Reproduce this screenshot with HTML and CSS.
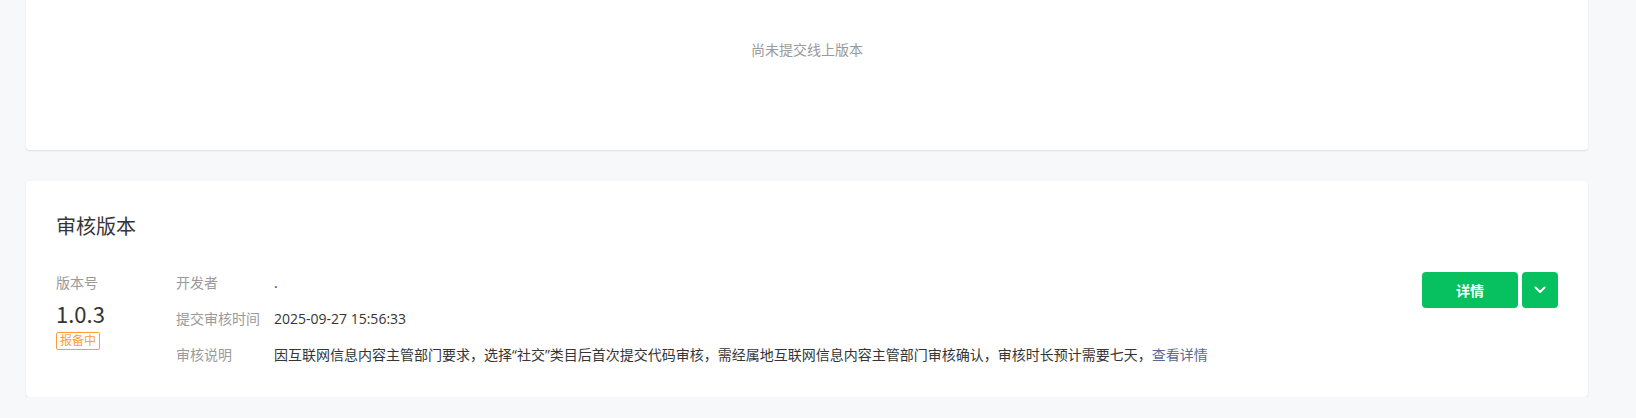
FILE: index.html
```html
<!DOCTYPE html>
<html lang="zh-CN">
<head>
<meta charset="utf-8">
<title>版本管理</title>
<link rel="stylesheet" href="styles.css">
</head>
<body>
<div class="page">
  <section class="card card-online">
    <div class="empty">尚未提交线上版本</div>
  </section>

  <section class="card card-review">
    <h2 class="card-title">审核版本</h2>
    <div class="version">
      <div class="version-main">
        <div class="label">版本号</div>
        <div class="version-num">1.0.3</div>
        <span class="badge">报备中</span>
      </div>
      <div class="version-info">
        <div class="info-row">
          <div class="info-label">开发者</div>
          <div class="info-value">.</div>
        </div>
        <div class="info-row">
          <div class="info-label">提交审核时间</div>
          <div class="info-value">2025-09-27 15:56:33</div>
        </div>
        <div class="info-row">
          <div class="info-label">审核说明</div>
          <div class="info-value">因互联网信息内容主管部门要求，选择“社交”类目后首次提交代码审核，需经属地互联网信息内容主管部门审核确认，审核时长预计需要七天，<a class="link" href="#">查看详情</a></div>
        </div>
      </div>
      <div class="version-actions">
        <button class="btn btn-primary" type="button">详情</button>
        <button class="btn btn-primary btn-icon" type="button" aria-label="更多">
          <svg width="12" height="8" viewBox="0 0 12 8"><path d="M1.5 1.5 L6 6 L10.5 1.5" fill="none" stroke="#fff" stroke-width="2" stroke-linecap="round" stroke-linejoin="round"/></svg>
        </button>
      </div>
    </div>
  </section>
</div>
</body>
</html>
```

FILE: styles.css
```css
* { box-sizing: border-box; }
html, body {
  margin: 0;
  padding: 0;
  background: #f7f8fa;
  font-family: "Open Sans", "Noto Sans CJK SC", sans-serif;
  color: #353535;
  overflow: hidden;
}
.page {
  padding: 0 48px 0 26px;
  display: flex;
  flex-direction: column;
  gap: 31px;
}
.card {
  background: #fff;
  border-radius: 4px;
  box-shadow: 0 1px 2px rgba(0, 0, 0, 0.1);
}
.card-online {
  margin-top: -50px;
  height: 200px;
  display: flex;
  align-items: center;
  justify-content: center;
}
.empty {
  font-size: 14px;
  line-height: 20px;
  color: #9a9a9a;
}
.card-review {
  padding: 30px 30px 32px 30px;
}
.card-title {
  margin: 0;
  font-size: 20px;
  font-weight: 400;
  line-height: 32px;
  color: #353535;
}
.version {
  margin-top: 30px;
  display: flex;
  align-items: flex-start;
}
.version-main {
  width: 120px;
  flex: none;
  display: flex;
  flex-direction: column;
  align-items: flex-start;
}
.label {
  font-size: 14px;
  line-height: 20px;
  color: #9a9a9a;
}
.version-num {
  margin-top: 4px;
  font-family: "Noto Sans CJK SC", sans-serif;
  font-size: 22px;
  line-height: 32px;
  color: #353535;
}
.badge {
  margin-top: 3px;
  font-size: 12px;
  line-height: 16px;
  padding: 0 3px;
  color: #fa9d3b;
  border: 1px solid #fa9d3b;
  border-radius: 2px;
}
.version-info {
  flex: 1;
  display: flex;
  flex-direction: column;
  gap: 16px;
}
.info-row {
  display: flex;
  font-size: 14px;
  line-height: 20px;
}
.info-label {
  width: 98px;
  flex: none;
  color: #9a9a9a;
}
.info-value {
  color: #353535;
}
.link {
  color: #576b95;
  text-decoration: none;
}
.version-actions {
  flex: none;
  display: flex;
  gap: 4px;
  margin-top: -1px;
}
.btn {
  border: 0;
  border-radius: 4px;
  font-family: inherit;
  cursor: pointer;
}
.btn-primary {
  background: #07c160;
  color: #fff;
  font-size: 14px;
  font-weight: 700;
  height: 36px;
  width: 96px;
}
.btn-icon {
  width: 36px;
  display: flex;
  align-items: center;
  justify-content: center;
  padding: 0;
}
```
